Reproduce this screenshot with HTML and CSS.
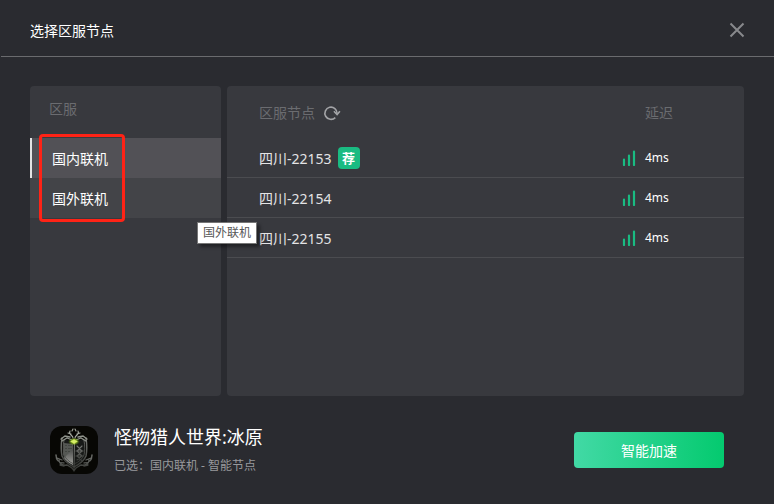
FILE: index.html
```html
<!DOCTYPE html>
<html lang="zh-CN">
<head>
<meta charset="utf-8">
<meta name="viewport" content="width=device-width, initial-scale=1">
<title>选择区服节点</title>
<link rel="stylesheet" href="styles.css">
</head>
<body>
<svg class="sprite" aria-hidden="true">
  <symbol id="signal" viewBox="0 0 14 16">
    <path d="M2 9.5V15M7 5.5V15M12 1.5V15" fill="none" stroke="#1abb82" stroke-width="2.2" stroke-linecap="round"/>
  </symbol>
</svg>
<div class="dialog">
  <header class="titlebar">
    <h1 class="title">选择区服节点</h1>
    <button class="icon-button" type="button" aria-label="关闭">
      <svg width="16" height="16" viewBox="0 0 16 16"><path d="M1.5 1.5l13 13M14.5 1.5l-13 13" fill="none" stroke="#88898c" stroke-width="2"/></svg>
    </button>
  </header>

  <main class="panels">
    <nav class="panel regions" aria-label="区服">
      <h2 class="regions-title">区服</h2>
      <div class="region-list">
        <button class="region region-active" type="button">国内联机</button>
        <button class="region" type="button">国外联机</button>
        <span class="highlight"></span>
        <span class="tooltip" role="tooltip">国外联机</span>
      </div>
    </nav>

    <section class="panel nodes">
      <table class="node-table">
        <thead>
          <tr>
            <th class="name" scope="col">
              <div class="cell">区服节点
                <button class="icon-button" type="button" aria-label="刷新">
                  <svg width="18" height="16" viewBox="0 0 18 16"><path d="M12.300 12.600A6.100 6.100 0 1 1 14.100 8.500" fill="none" stroke="#a3a4a7" stroke-width="1.600"/><path d="M10.900 6.300l3.200 3.200 2.800-3.200" fill="none" stroke="#a3a4a7" stroke-width="1.600"/></svg>
                </button>
              </div>
            </th>
            <th class="delay" scope="col">延迟</th>
          </tr>
        </thead>
        <tbody>
          <tr>
            <td class="name"><div class="cell">四川-22153<span class="badge">荐</span></div></td>
            <td class="delay"><div class="cell delay-cell"><svg class="signal" width="14" height="16"><use href="#signal"/></svg>4ms</div></td>
          </tr>
          <tr>
            <td class="name">四川-22154</td>
            <td class="delay"><div class="cell delay-cell"><svg class="signal" width="14" height="16"><use href="#signal"/></svg>4ms</div></td>
          </tr>
          <tr>
            <td class="name">四川-22155</td>
            <td class="delay"><div class="cell delay-cell"><svg class="signal" width="14" height="16"><use href="#signal"/></svg>4ms</div></td>
          </tr>
        </tbody>
      </table>
    </section>
  </main>

  <footer class="footer">
    <svg class="game-icon" width="48" height="48" viewBox="0 0 48 48" aria-hidden="true">
      <defs>
        <linearGradient id="metal" x1="0" y1="0" x2="0" y2="1"><stop offset="0" stop-color="#777975"/><stop offset="1" stop-color="#383a37"/></linearGradient>
        <linearGradient id="plate" x1="0" y1="0" x2="0" y2="1"><stop offset="0" stop-color="#4a4c4a"/><stop offset="1" stop-color="#a2a39f"/></linearGradient>
        <radialGradient id="glow"><stop offset="0" stop-color="#ffffc0"/><stop offset=".35" stop-color="#b4df32"/><stop offset="1" stop-color="#4e7a10" stop-opacity="0"/></radialGradient>
      </defs>
      <rect width="48" height="48" rx="12" fill="#070704"/>
      <path d="M14 13l10 3 10-3 1 17c-2 5-6 8-11 10-5-2-9-5-11-10z" fill="#171917"/>
      <path d="M14 17l9 1v10l-8 6-2-6z" fill="#555854"/>
      <path d="M23 23v16c-4-2-7-4-9-7z" fill="url(#plate)"/>
      <path d="M16 19v9M19 19v7M21 19v5" stroke="#30322f" stroke-dasharray="1 2" fill="none"/>
      <g fill="none" stroke="url(#metal)" stroke-linecap="round">
        <path d="M12 12c-1 7-1 13 0 18 2 5 6 8 12 11 6-3 10-6 12-11 1-5 1-11 0-18" stroke-width="1.500"/>
        <path d="M14 14c-1 6-1 11 0 15 2 4 5 7 10 9 5-2 8-5 10-9 1-4 1-9 0-15" stroke-width=".8"/>
        <path d="M24.500 17l-.5 27M22 42l2 3 2-3" stroke-width="1.100"/>
        <path d="M6 29c0 5 3 8 8 8M9 34c0 4 4 6 8 5l5 3M7 32l5 2M10 39l4 1M42 29c0 5-3 8-8 8M39 34c0 4-4 6-8 5l-5 3M41 32l-5 2M38 39l-4 1" stroke-width="1.300"/>
        <path d="M27 20l5 5-5 5 5 5M32 20l-5 5 5 5-5 4M26 25h7M26 30h7" stroke-width="1.100"/>
        <path d="M12 15l5-3 5 2M36 15l-5-3-5 2M11 13l4-3 5 1M37 13l-4-3-5 1" stroke="#8f938b" stroke-width="1.300"/>
        <path d="M23 12c0-3-5-3-3-7M21 8l-3-1M22 5l1-2M25 12c0-3 5-3 3-7M27 8l3-1M26 5l-1-2" stroke="#a5a9a0" stroke-width="1.100"/>
      </g>
      <ellipse cx="24" cy="15.500" rx="6" ry="4" fill="url(#glow)"/>
      <path d="M24 12.500l1 2 3 1-3 1-1 2-1-2-3-1 3-1z" fill="#d7ed6b"/>
    </svg>
    <div class="game">
      <p class="game-name">怪物猎人世界:冰原</p>
      <p class="game-choice">已选：国内联机 - 智能节点</p>
    </div>
    <button class="accelerate" type="button">智能加速</button>
  </footer>
</div>
</body>
</html>
```
FILE: styles.css
```css
* {
  box-sizing: border-box;
}

body {
  margin: 0;
  background: #2a2b30;
  color: #fff;
  font-family: "Noto Sans", "Noto Sans CJK SC", sans-serif;
  font-size: 14px;
  line-height: 20px;
}

h1, h2, p {
  margin: 0;
  font-weight: 400;
}

button {
  border: 0;
  padding: 0;
  background: none;
  color: inherit;
  font: inherit;
  cursor: pointer;
}

svg {
  display: block;
  flex: none;
}

.sprite {
  position: absolute;
  width: 0;
  height: 0;
}

.dialog {
  display: flex;
  flex-direction: column;
  min-height: 100vh;
}

.titlebar {
  display: flex;
  align-items: center;
  justify-content: space-between;
  margin-left: 1px;
  padding: 19px 29px 15px;
  border-bottom: 1px solid #6a6b6e;
}

.title {
  padding-top: 2px;
  font-size: 14px;
}

.icon-button {
  display: block;
}

.panels {
  display: flex;
  flex: 1;
  gap: 6px;
  padding: 29px 30px 28px;
}

.panel {
  border-radius: 4px;
  background: #38393e;
}

.regions {
  flex: none;
  width: 191px;
}

.regions-title {
  padding: 13px 19px 19px;
  color: #6b6c70;
  font-size: 14px;
}

.region-list {
  position: relative;
}

.region {
  display: block;
  width: 100%;
  height: 40px;
  padding: 2px 20px 0;
  border-left: 2px solid transparent;
  background: #434448;
  text-align: left;
}

.region-active {
  border-left-color: #e3e3e4;
  background: #525156;
}

.highlight {
  position: absolute;
  top: -4px;
  left: 9px;
  width: 86px;
  height: 88px;
  border: 3px solid #ff2316;
  border-radius: 4px;
  pointer-events: none;
}

.tooltip {
  position: absolute;
  top: 84px;
  left: 167px;
  z-index: 1;
  padding: 0 5px;
  border: 1px solid #767676;
  background: #fff;
  box-shadow: 3px 3px 3px rgba(0, 0, 0, 0.4);
  color: #575757;
  font-size: 12px;
  white-space: nowrap;
}

.nodes {
  flex: 1;
}

.node-table {
  width: 100%;
  border-collapse: separate;
  border-spacing: 0;
}

th, td {
  height: 40px;
  padding: 0;
  text-align: left;
  font-weight: 400;
}

th {
  height: 52px;
  padding-top: 2px;
  color: #6b6c70;
}

td {
  border-bottom: 1px solid #4b4c50;
  color: #e4e4e5;
}

.name {
  padding-top: 2px;
  padding-left: 32px;
}

.delay {
  width: 122px;
}

th.delay {
  padding-left: 23px;
}

.cell {
  display: flex;
  align-items: center;
  gap: 8px;
}

.badge {
  width: 22px;
  margin: -1px 0 1px -2px;
  border-radius: 4px;
  background: #1abb82;
  color: #fff;
  font-size: 13px;
  font-weight: 700;
  line-height: 22px;
  text-align: center;
}

.delay-cell {
  gap: 9px;
  color: #fff;
  font-size: 12px;
}

.footer {
  display: flex;
  align-items: center;
  padding: 0 50px 28px;
}

.game {
  flex: 1;
  padding-left: 16px;
}

.game-name {
  font-size: 18px;
  line-height: 26px;
}

.game-choice {
  padding-top: 6px;
  color: #98999c;
  font-size: 12px;
}

.accelerate {
  width: 150px;
  height: 36px;
  padding-top: 2px;
  border-radius: 4px;
  background: linear-gradient(90deg, #42d9a5, #04ca6f);
}
```
